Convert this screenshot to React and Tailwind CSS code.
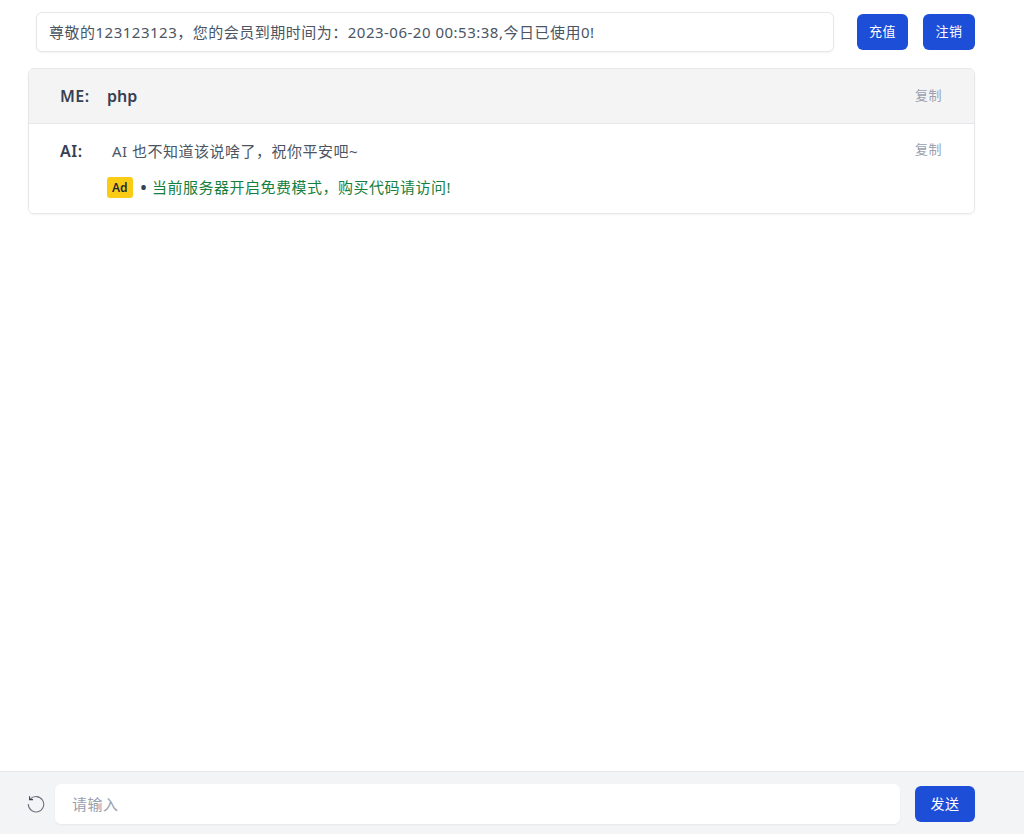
export default function App() {
  return (
    <div className="flex h-[834px] flex-col bg-white font-['Noto_Sans','Noto_Sans_CJK_SC',sans-serif] text-[#374151]">
      <main className="flex-1 pl-7 pr-[49px] pt-3">
        <div className="flex items-center pl-2">
          <div className="flex h-10 flex-1 items-center rounded-md border border-gray-200 bg-white pl-3 text-[15px] tracking-[0.5px] text-[#4b5563] shadow-xs">
            尊敬的123123123，您的会员到期时间为：2023-06-20 00:53:38,今日已使用0!
          </div>
          <button className="ml-[23px] h-9 w-[51px] rounded-md bg-[#1d4ed8] text-[13px] tracking-[0.5px] text-white">充值</button>
          <button className="ml-[15px] h-9 w-[52px] rounded-md bg-[#1d4ed8] text-[13px] tracking-[0.5px] text-white">注销</button>
        </div>
        <div className="mt-4 overflow-hidden rounded-md border border-gray-200 shadow-xs">
          <div className="flex h-[55px] items-center border-b border-gray-200 bg-[#f4f4f5] pl-[31px] pr-8">
            <span className="w-[47px] text-base font-semibold leading-6 tracking-[0.5px]">ME:</span>
            <span className="flex-1 text-base font-semibold leading-6">php</span>
            <button className="text-[13px] tracking-[0.5px] text-gray-400">复制</button>
          </div>
          <div className="flex h-[89px] bg-white pl-[31px] pr-8 pt-[15px]">
            <span className="w-[47px] text-base font-semibold leading-6 tracking-[0.5px]">AI:</span>
            <div className="flex-1">
              <div className="pl-[5px] text-[15px] leading-6 tracking-[0.5px] text-[#4b5563]">AI 也不知道该说啥了，祝你平安吧~</div>
              <div className="mt-3 flex items-center text-[15px] leading-6 tracking-[0.5px]">
                <span className="rounded-[3px] bg-[#facc15] px-[5px] text-xs font-semibold leading-[21px] tracking-normal text-[#1f2937]">Ad</span>
                <span className="ml-[8px] mr-[5px] text-base font-bold text-[#374151]">•</span>
                <span className="text-[#15803d]">当前服务器开启免费模式，购买代码请访问!</span>
              </div>
            </div>
            <button className="h-5 self-start text-[13px] leading-5 tracking-[0.5px] text-gray-400">复制</button>
          </div>
        </div>
      </main>
      <footer className="flex h-[63px] items-center border-t border-gray-200 bg-[#f3f4f6] pl-[27px] pr-[49px] pt-[2px]">
        <svg className="h-[18px] w-[18px] text-[#6b7280]" viewBox="0 0 18 18" fill="none" stroke="currentColor" strokeWidth="1.1">
          <path d="M3.2 4.2A7.7 7.7 0 1 1 1.3 9" />
          <path d="M2.6 1.2v3.4h3.4" stroke="#374151" />
        </svg>
        <input
          placeholder="请输入"
          className="ml-[10px] h-10 flex-1 rounded-md border border-white bg-white pl-4 text-[15px] tracking-[0.5px] shadow-xs outline-none placeholder:text-gray-400"
        />
        <button className="ml-[15px] h-9 w-[60px] rounded-md bg-[#1d4ed8] text-sm tracking-[0.5px] text-white">发送</button>
      </footer>
    </div>
  );
}
